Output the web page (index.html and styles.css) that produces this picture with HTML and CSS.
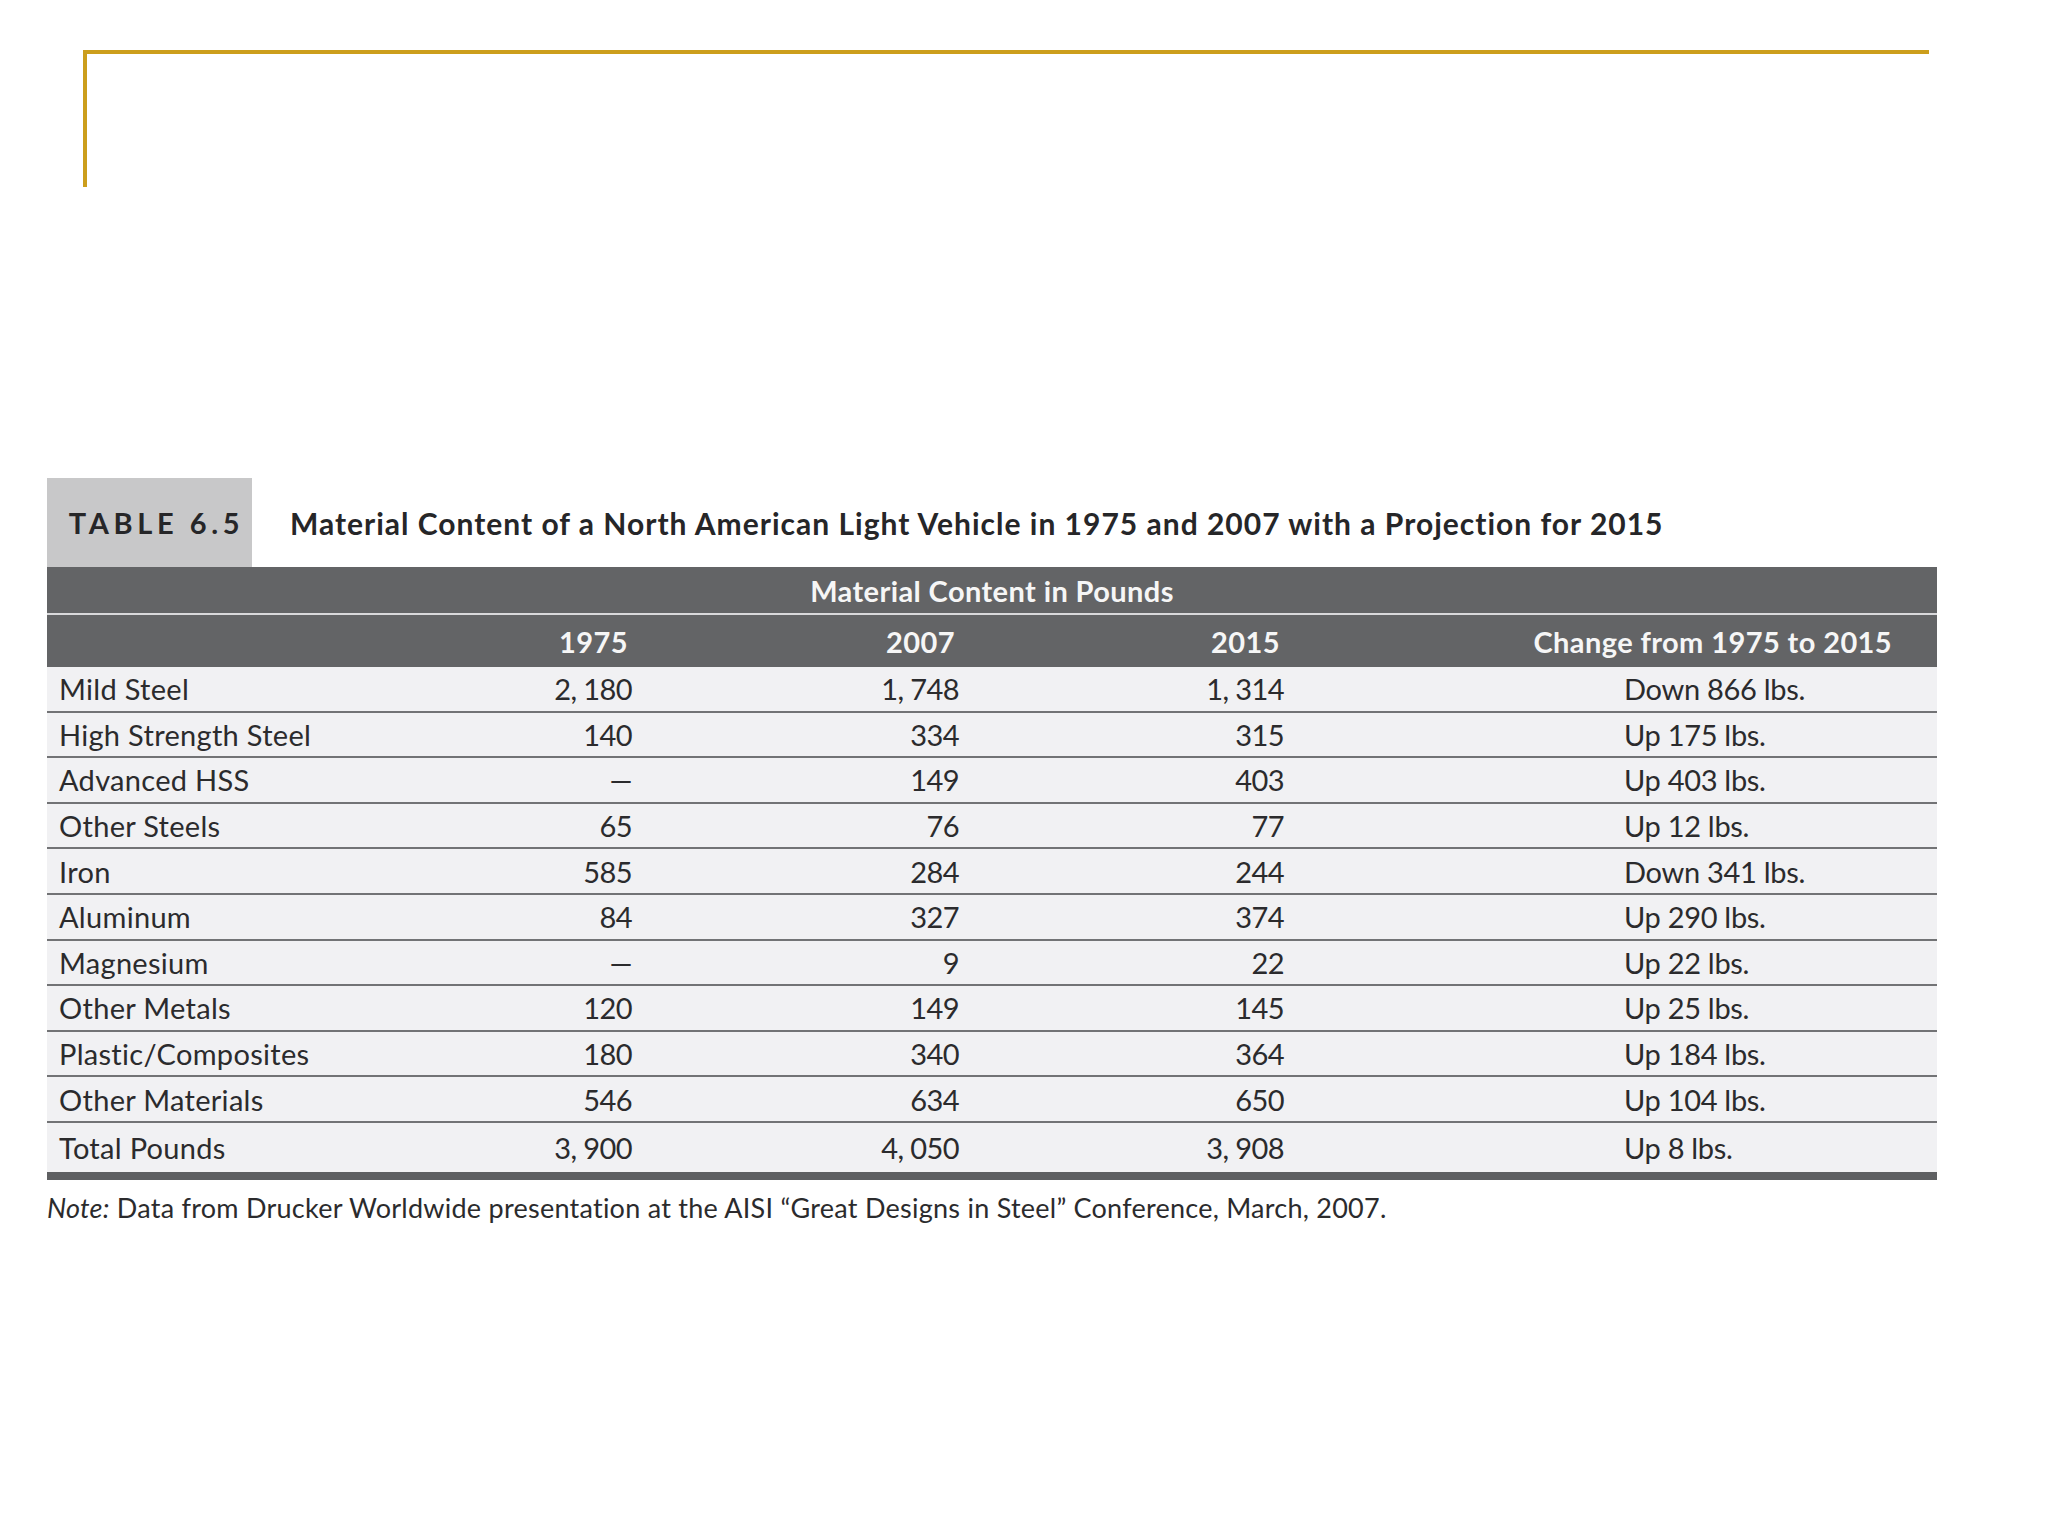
FILE: index.html
```html
<!DOCTYPE html>
<html>
<head>
<meta charset="utf-8">
<title>Table 6.5</title>
<link rel="stylesheet" href="styles.css">
</head>
<body>
<div class="slide">
  <div class="frame"></div>
  <section class="exhibit">
    <div class="caption">
      <div class="tab">TABLE 6.5</div>
      <h1 class="title">Material Content of a North American Light Vehicle in 1975 and 2007 with a Projection for 2015</h1>
    </div>
    <table class="data">
      <colgroup>
        <col class="c-label"><col class="c-num1"><col class="c-num2"><col class="c-num3"><col class="c-change">
      </colgroup>
      <thead>
        <tr class="group-row">
          <th colspan="5"><div class="group">Material Content in Pounds</div></th>
        </tr>
        <tr class="head-row">
          <th></th>
          <th class="num">1975</th>
          <th class="num">2007</th>
          <th class="num">2015</th>
          <th class="chg-h">Change from 1975 to 2015</th>
        </tr>
      </thead>
      <tbody>
        <tr><td class="lbl">Mild Steel</td><td class="num">2, 180</td><td class="num">1, 748</td><td class="num">1, 314</td><td class="chg">Down 866 lbs.</td></tr>
        <tr><td class="lbl">High Strength Steel</td><td class="num">140</td><td class="num">334</td><td class="num">315</td><td class="chg">Up 175 lbs.</td></tr>
        <tr><td class="lbl">Advanced HSS</td><td class="num">—</td><td class="num">149</td><td class="num">403</td><td class="chg">Up 403 lbs.</td></tr>
        <tr><td class="lbl">Other Steels</td><td class="num">65</td><td class="num">76</td><td class="num">77</td><td class="chg">Up 12 lbs.</td></tr>
        <tr><td class="lbl">Iron</td><td class="num">585</td><td class="num">284</td><td class="num">244</td><td class="chg">Down 341 lbs.</td></tr>
        <tr><td class="lbl">Aluminum</td><td class="num">84</td><td class="num">327</td><td class="num">374</td><td class="chg">Up 290 lbs.</td></tr>
        <tr><td class="lbl">Magnesium</td><td class="num">—</td><td class="num">9</td><td class="num">22</td><td class="chg">Up 22 lbs.</td></tr>
        <tr><td class="lbl">Other Metals</td><td class="num">120</td><td class="num">149</td><td class="num">145</td><td class="chg">Up 25 lbs.</td></tr>
        <tr><td class="lbl">Plastic/Composites</td><td class="num">180</td><td class="num">340</td><td class="num">364</td><td class="chg">Up 184 lbs.</td></tr>
        <tr><td class="lbl">Other Materials</td><td class="num">546</td><td class="num">634</td><td class="num">650</td><td class="chg">Up 104 lbs.</td></tr>
        <tr class="total"><td class="lbl">Total Pounds</td><td class="num">3, 900</td><td class="num">4, 050</td><td class="num">3, 908</td><td class="chg">Up 8 lbs.</td></tr>
      </tbody>
    </table>
    <p class="note"><em>Note:</em> Data from Drucker Worldwide presentation at the AISI “Great Designs in Steel” Conference, March, 2007.</p>
  </section>
</div>
</body>
</html>
```

FILE: styles.css
```css
html, body {
  margin: 0;
  padding: 0;
  background: #ffffff;
}

.slide {
  width: 2048px;
  height: 1536px;
  position: relative;
  font-family: "Lato", "Liberation Sans", sans-serif;
  color: #2b2b2d;
}

.frame {
  margin-left: 83px;
  margin-top: 50px;
  width: 1842px;
  height: 133px;
  border-top: 4px solid #cc9e1c;
  border-left: 4px solid #cc9e1c;
}

.exhibit {
  margin-left: 47px;
  margin-top: 291px;
  width: 1890px;
}

.caption {
  display: flex;
  align-items: center;
  height: 89px;
}

.tab {
  width: 205px;
  height: 89px;
  background: #c8c8c9;
  display: flex;
  align-items: center;
  justify-content: center;
  padding-left: 14px;
  box-sizing: border-box;
  font-weight: 700;
  font-size: 29px;
  letter-spacing: 4.6px;
  color: #262628;
}

.title {
  margin: 0 0 0 38px;
  font-size: 30px;
  font-weight: 700;
  color: #262628;
  letter-spacing: 1px;
  white-space: nowrap;
}

.data {
  width: 1890px;
  border-collapse: collapse;
  table-layout: fixed;
  border-bottom: 8px solid #5e5f61;
}

.c-label { width: 300px; }
.c-num1 { width: 285px; }
.c-num2 { width: 327px; }
.c-num3 { width: 325px; }
.c-change { width: 653px; }

.data thead th {
  background: #636466;
  color: #f6f6f6;
  font-weight: 700;
  font-size: 29px;
  letter-spacing: 0.4px;
  padding: 0;
}

.group-row th {
  height: 46px;
  padding: 0 10px 0 11px;
  vertical-align: bottom;
}

.group {
  height: 46px;
  line-height: 48px;
  text-align: center;
  border-bottom: 2px solid #d9d9db;
  box-sizing: content-box;
}

.head-row th {
  height: 52px;
}

.head-row th.num {
  text-align: right;
  padding-right: 4px;
}

.head-row th.chg-h {
  text-align: right;
  padding-right: 45px;
}

.data tbody td {
  background: #f1f1f3;
  font-size: 29px;
  letter-spacing: 0.3px;
  height: 43.6px;
  padding: 0;
  border-bottom: 2px solid #727375;
  color: #2b2b2d;
}

.data tbody tr.total td {
  height: 49px;
  border-bottom: 0;
}

.data td.lbl {
  padding-left: 12px;
}

.data td.num {
  text-align: right;
  letter-spacing: -0.6px;
}

.data td.chg {
  padding-left: 340px;
  letter-spacing: -0.3px;
}

.note {
  margin: 11px 0 0 0;
  font-size: 27px;
  letter-spacing: 0.25px;
  line-height: 34px;
  color: #2b2b2d;
}

.note em {
  font-style: italic;
}
```
